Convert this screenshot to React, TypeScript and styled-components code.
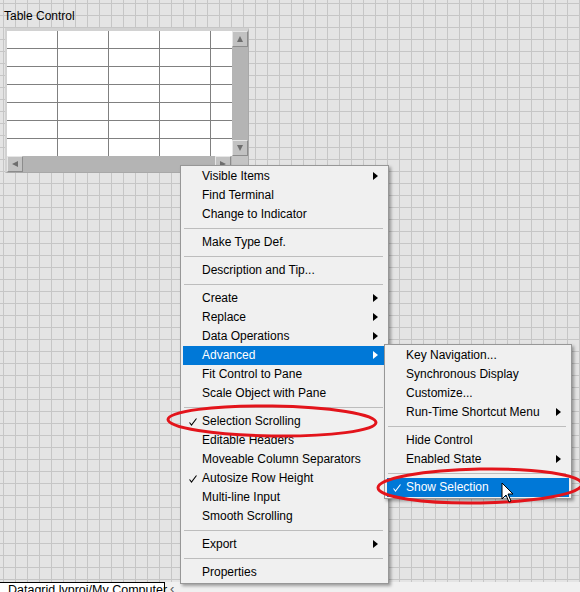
import React from 'react'
import styled, { createGlobalStyle } from 'styled-components'

const GlobalStyle = createGlobalStyle`
	html, body {
		margin: 0;
		padding: 0;
		overflow: hidden;
		background: #e4e4e4;
	}
	* {
		box-sizing: border-box;
	}
`

type Entry = 'sep' | { label: string; sub?: boolean; checked?: boolean; active?: boolean }

const mainItems: Entry[] = [
	{ label: 'Visible Items', sub: true },
	{ label: 'Find Terminal' },
	{ label: 'Change to Indicator' },
	'sep',
	{ label: 'Make Type Def.' },
	'sep',
	{ label: 'Description and Tip...' },
	'sep',
	{ label: 'Create', sub: true },
	{ label: 'Replace', sub: true },
	{ label: 'Data Operations', sub: true },
	{ label: 'Advanced', sub: true, active: true },
	{ label: 'Fit Control to Pane' },
	{ label: 'Scale Object with Pane' },
	'sep',
	{ label: 'Selection Scrolling', checked: true },
	{ label: 'Editable Headers' },
	{ label: 'Moveable Column Separators' },
	{ label: 'Autosize Row Height', checked: true },
	{ label: 'Multi-line Input' },
	{ label: 'Smooth Scrolling' },
	'sep',
	{ label: 'Export', sub: true },
	'sep',
	{ label: 'Properties' },
]

const advancedItems: Entry[] = [
	{ label: 'Key Navigation...' },
	{ label: 'Synchronous Display' },
	{ label: 'Customize...' },
	{ label: 'Run-Time Shortcut Menu', sub: true },
	'sep',
	{ label: 'Hide Control' },
	{ label: 'Enabled State', sub: true },
	'sep',
	{ label: 'Show Selection', checked: true, active: true },
]

function Menu({ items }: { items: Entry[] }) {
	return (
		<>
			{items.map((it, i) =>
				it === 'sep' ? (
					<Separator key={i} />
				) : (
					<Item key={i} $active={!!it.active}>
						{it.checked && (
							<Check viewBox="0 0 8 8">
								<polyline points="0.5,4.5 2.5,7 7.5,0.5" />
							</Check>
						)}
						{it.label}
						{it.sub && <SubArrow $active={!!it.active} />}
					</Item>
				)
			)}
		</>
	)
}

export default function App() {
	const rows = Array.from({ length: 7 })
	const cols = Array.from({ length: 5 })

	return (
		<>
			<GlobalStyle />
			<Page>
				<Canvas>
					<Label>Table Control</Label>
					<TableFrame>
						<TableBody>
							<Cells>
								{rows.map((_, r) => cols.map((_, c) => <Cell key={`${r}-${c}`} />))}
							</Cells>
							<VScroll>
								<ScrollButton>
									<Tri $dir="up" />
								</ScrollButton>
								<ScrollButton>
									<Tri $dir="down" />
								</ScrollButton>
							</VScroll>
						</TableBody>
						<TableFoot>
							<HScroll>
								<ScrollButton>
									<Tri $dir="left" />
								</ScrollButton>
								<ScrollButton>
									<Tri $dir="right" />
								</ScrollButton>
							</HScroll>
							<Corner />
						</TableFoot>
					</TableFrame>
				</Canvas>
				<StatusBar>
					<PathBox>Datagrid.lvproj/My Computer</PathBox>
					<ScrollHint>‹</ScrollHint>
				</StatusBar>

				<MainMenu>
					<Menu items={mainItems} />
				</MainMenu>
				<SubMenu>
					<Menu items={advancedItems} />
				</SubMenu>

				<Marks viewBox="0 0 580 592">
					<ellipse cx="272" cy="421" rx="104" ry="15" transform="rotate(0.8 272 421)" />
					<ellipse cx="480" cy="486" rx="102" ry="17" transform="rotate(-1 480 486)" />
					<path
						className="cursor"
						d="M502 483 L502 499 L506 495 L509 502 L511 501 L508 494 L513 494 Z"
					/>
				</Marks>
			</Page>
		</>
	)
}

const Page = styled.div`
	position: relative;
	width: 580px;
	height: 592px;
	display: flex;
	flex-direction: column;
	overflow: hidden;
	font-family: 'Liberation Sans', Arial, sans-serif;
	font-size: 12px;
	color: #000;
`

const Canvas = styled.div`
	position: relative;
	flex: 1;
	background-color: #e4e4e4;
	background-image: linear-gradient(to right, #c6c6c6 1px, transparent 1px),
		linear-gradient(to bottom, #c6c6c6 1px, transparent 1px);
	background-size: 12px 12px;
	background-position: 3px 3px;
`

const Label = styled.div`
	position: absolute;
	left: 4px;
	top: 9px;
	line-height: 14px;
	white-space: nowrap;
`

const TableFrame = styled.div`
	position: absolute;
	left: 5px;
	top: 28px;
	width: 244px;
	display: flex;
	flex-direction: column;
	background: #c4c4c4;
	border-style: solid;
	border-color: #d2d2d2 #a8a8a8 #a8a8a8 #d2d2d2;
	border-width: 3px 1px 1px 2px;
`

const TableBody = styled.div`
	display: flex;
	height: 125px;
`

const Cells = styled.div`
	width: 225px;
	height: 125px;
	overflow: hidden;
	background: #fff;
	display: grid;
	grid-template-columns: repeat(5, 51px);
	grid-auto-rows: 18px;
`

const Cell = styled.div`
	border-right: 1px solid #808080;
	border-bottom: 1px solid #808080;
`

const VScroll = styled.div`
	width: 16px;
	display: flex;
	flex-direction: column;
	justify-content: space-between;
	background: #b4b4b4;
`

const TableFoot = styled.div`
	display: flex;
	height: 16px;
`

const HScroll = styled.div`
	width: 225px;
	display: flex;
	justify-content: space-between;
	padding-right: 1px;
	background: #b4b4b4;
`

const Corner = styled.div`
	width: 16px;
	background: #c4c4c4;
`

const ScrollButton = styled.div`
	width: 16px;
	height: 16px;
	display: flex;
	align-items: center;
	justify-content: center;
	background: #c2c2c2;
	border-style: solid;
	border-width: 1px;
	border-color: #e6e6e6 #8c8c8c #8c8c8c #e6e6e6;
`

const Tri = styled.div<{ $dir: 'up' | 'down' | 'left' | 'right' }>`
	width: 0;
	height: 0;
	border-style: solid;
	border-color: transparent;
	${({ $dir }) =>
		$dir === 'up'
			? 'border-width: 0 3px 6px 3px; border-bottom-color: #6e6e6e;'
			: $dir === 'down'
			? 'border-width: 6px 3px 0 3px; border-top-color: #6e6e6e;'
			: $dir === 'left'
			? 'border-width: 3px 6px 3px 0; border-right-color: #6e6e6e;'
			: 'border-width: 3px 0 3px 6px; border-left-color: #6e6e6e;'}
`

const StatusBar = styled.div`
	height: 10px;
	display: flex;
	align-items: flex-start;
	background: #f0f0f0;
	overflow: hidden;
`

const PathBox = styled.div`
	width: 165px;
	height: 16px;
	padding-left: 8px;
	line-height: 14px;
	font-size: 12.5px;
	background: #fff;
	border: 1px solid #000;
	border-left: none;
	white-space: nowrap;
`

const ScrollHint = styled.div`
	margin-left: 5px;
	line-height: 14px;
	font-size: 13px;
	color: #555;
`

const MenuBox = styled.div`
	position: absolute;
	display: flex;
	flex-direction: column;
	background: #f0f0f0;
	border: 1px solid #979797;
	box-shadow: 2px 2px 3px rgba(0, 0, 0, 0.35);
`

const MainMenu = styled(MenuBox)`
	left: 180px;
	top: 165px;
	width: 209px;
	padding: 1px 0 1px;
`

const SubMenu = styled(MenuBox)`
	left: 384px;
	top: 344px;
	width: 188px;
	padding: 1px 0;
`

const Item = styled.div<{ $active: boolean }>`
	position: relative;
	height: 19px;
	margin: 0 2px;
	padding-left: 19px;
	line-height: 19px;
	white-space: nowrap;
	background: ${({ $active }) => ($active ? '#0078d7' : 'transparent')};
	color: ${({ $active }) => ($active ? '#fff' : '#000')};
	svg {
		stroke: ${({ $active }) => ($active ? '#fff' : '#000')};
	}
`

const Check = styled.svg`
	position: absolute;
	left: 6px;
	top: 6px;
	width: 8px;
	height: 8px;
	fill: none;
	stroke-width: 1.1;
`

const SubArrow = styled.span<{ $active: boolean }>`
	position: absolute;
	right: 8px;
	top: 5px;
	width: 0;
	height: 0;
	border-style: solid;
	border-width: 4px 0 4px 5px;
	border-color: transparent;
	border-left-color: ${({ $active }) => ($active ? '#fff' : '#000')};
`

const Separator = styled.div`
	height: 9px;
	margin: 0 5px 0 3px;
	display: flex;
	align-items: center;
	&::after {
		content: '';
		flex: 1;
		height: 1px;
		background: #bdbdbd;
	}
`

const Marks = styled.svg`
	position: absolute;
	left: 0;
	top: 0;
	width: 580px;
	height: 592px;
	pointer-events: none;
	ellipse {
		fill: none;
		stroke: #e3141b;
		stroke-width: 3;
	}
	.cursor {
		fill: #fff;
		stroke: #000;
		stroke-width: 1;
		stroke-linejoin: miter;
	}
`
